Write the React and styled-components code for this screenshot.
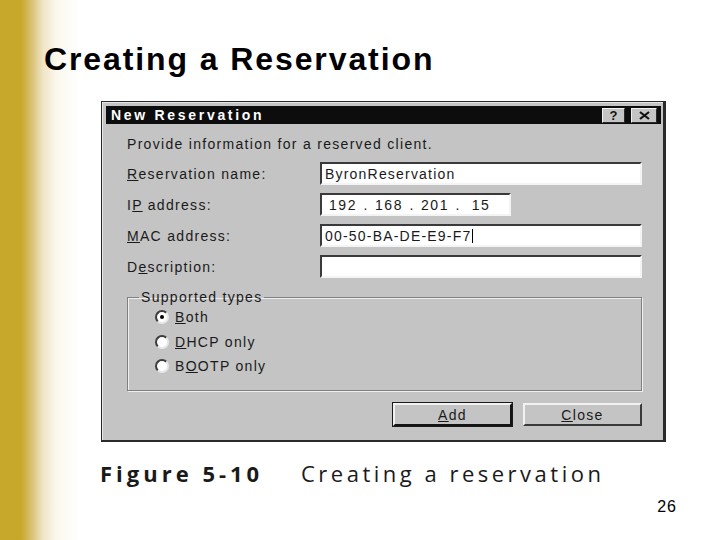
import React from 'react';
import styled, { createGlobalStyle } from 'styled-components';

const GlobalStyle = createGlobalStyle`
  html, body {
    margin: 0;
    padding: 0;
  }
  body {
    font-family: "Liberation Sans", Arial, sans-serif;
    background: #fff;
  }
`;

const Slide = styled.div`
  width: 720px;
  height: 540px;
  display: flex;
  flex-direction: column;
  overflow: hidden;
  background: linear-gradient(90deg, #c8a82a 0px, #c8a82a 21px, #d9c276 32px, #efe5c6 43px, #fbf8ee 57px, #fff 80px);
`;

const SlideTitle = styled.h1`
  margin: 41px 0 0 44px;
  font-family: "Liberation Sans", Arial, sans-serif;
  font-size: 32px;
  line-height: 36px;
  font-weight: 700;
  letter-spacing: 1.9px;
  color: #000;
`;

const Dialog = styled.div`
  box-sizing: border-box;
  width: 565px;
  margin: 24px 0 0 101px;
  padding: 4px 2px 0 4px;
  background: #c4c4c4;
  border: 1px solid #2a2a2a;
  border-right-width: 3px;
  border-bottom-width: 2px;
  box-shadow: inset 1px 1px 0 #e6e6e6;
  font-family: "Liberation Sans", Arial, sans-serif;
  font-size: 14px;
  letter-spacing: 1.3px;
  color: #1a1a1a;
`;

const TitleBar = styled.div`
  height: 18px;
  display: flex;
  align-items: center;
  justify-content: space-between;
  padding: 0 4px 0 5px;
  background: #0d0d0d;
`;

const TitleText = styled.span`
  color: #fff;
  font-size: 14px;
  font-weight: 700;
  letter-spacing: 2.7px;
`;

const TitleButtons = styled.div`
  display: flex;
  gap: 6px;
`;

const TitleButton = styled.div`
  box-sizing: border-box;
  width: ${p => p.w}px;
  height: 15px;
  display: flex;
  align-items: center;
  justify-content: center;
  background: #c4c4c4;
  border: 1px solid;
  border-color: #f2f2f2 #2a2a2a #2a2a2a #f2f2f2;
  font-size: 13px;
  font-weight: 700;
  letter-spacing: 0;
  color: #111;
`;

const Body = styled.div`
  padding: 12px 19px 14px 21px;
`;

const Intro = styled.div`
  line-height: 16px;
`;

const FormGrid = styled.div`
  display: grid;
  grid-template-columns: 193px 1fr;
  grid-auto-rows: 23px;
  row-gap: 8px;
  margin-top: 10px;
  align-items: center;
`;

const Label = styled.span`
  line-height: 16px;
`;

const Field = styled.div`
  box-sizing: border-box;
  height: 23px;
  width: ${p => (p.w ? `${p.w}px` : '100%')};
  display: flex;
  align-items: center;
  padding-left: 3px;
  background: #fff;
  border: 2px solid;
  border-color: #3a3a3a #f4f4f4 #f4f4f4 #3a3a3a;
  letter-spacing: 1.2px;
  white-space: pre;
`;

const Octet = styled.span`
  width: 36px;
  text-align: center;
  letter-spacing: 1.5px;
`;

const Dot = styled.span`
  width: 10px;
  text-align: center;
`;

const Caret = styled.span`
  display: inline-block;
  width: 0;
  height: 14px;
  border-left: 1.5px solid #000;
  margin-left: 1px;
`;

const GroupBox = styled.fieldset`
  margin: 11px 0 0 0;
  padding: 2px 10px 14px 27px;
  border: 1px solid #808080;
  box-shadow: inset 1px 1px 0 #efefef, 1px 1px 0 #efefef;
  min-inline-size: 0;
`;

const Legend = styled.legend`
  margin-left: -16px;
  padding: 0 2px;
  line-height: 16px;
`;

const RadioList = styled.div`
  display: flex;
  flex-direction: column;
  gap: 4.5px;
`;

const RadioRow = styled.label`
  height: 20px;
  display: flex;
  align-items: center;
  gap: 6px;
`;

const RadioDot = styled.span`
  box-sizing: border-box;
  width: 14px;
  height: 14px;
  border-radius: 50%;
  background: #fff;
  border: 2px solid;
  border-color: #3c3c3c #e8e8e8 #e8e8e8 #3c3c3c;
  display: flex;
  align-items: center;
  justify-content: center;

  &::after {
    content: '';
    display: ${p => (p.checked ? 'block' : 'none')};
    width: 4px;
    height: 4px;
    border-radius: 50%;
    background: #000;
  }
`;

const ButtonRow = styled.div`
  display: flex;
  justify-content: flex-end;
  gap: 11px;
  margin-top: 12px;
`;

const Button = styled.div`
  box-sizing: border-box;
  width: 119px;
  height: 23px;
  display: flex;
  align-items: center;
  justify-content: center;
  background: #c4c4c4;
  border: 2px solid;
  border-color: ${p => (p.primary ? '#f2f2f2 #141414 #141414 #f2f2f2' : '#f2f2f2 #3a3a3a #3a3a3a #f2f2f2')};
  box-shadow: ${p => (p.primary ? '0 0 0 1px #1a1a1a' : 'none')};
`;

const Caption = styled.div`
  display: flex;
  align-items: baseline;
  margin: 18px 0 0 100px;
  font-family: "Open Sans", "DejaVu Sans", sans-serif;
  font-size: 22px;
  line-height: 26px;
  color: #1a1a1a;
`;

const FigureNo = styled.span`
  font-weight: 700;
  letter-spacing: 4px;
  width: 201px;
`;

const FigureText = styled.span`
  font-weight: 400;
  letter-spacing: 3.5px;
`;

const PageNumber = styled.div`
  align-self: flex-end;
  margin: 12px 43px 0 0;
  font-family: "Liberation Sans", Arial, sans-serif;
  font-size: 16px;
  line-height: 18px;
  letter-spacing: 1px;
  color: #000;
`;

function CloseGlyph() {
  return (
    <svg width="11" height="9" viewBox="0 0 11 9">
      <path d="M1 1 L10 8 M10 1 L1 8" stroke="#111" strokeWidth="2.2" />
    </svg>
  );
}

const radios = [
  { key: 'both', label: <><u>B</u>oth</>, checked: true },
  { key: 'dhcp', label: <><u>D</u>HCP only</> },
  { key: 'bootp', label: <>B<u>O</u>OTP only</> },
];

export default function App() {
  return (
    <>
      <GlobalStyle />
      <Slide>
        <SlideTitle>Creating a Reservation</SlideTitle>

        <Dialog>
          <TitleBar>
            <TitleText>New Reservation</TitleText>
            <TitleButtons>
              <TitleButton w={23}>?</TitleButton>
              <TitleButton w={26}><CloseGlyph /></TitleButton>
            </TitleButtons>
          </TitleBar>

          <Body>
            <Intro>Provide information for a reserved client.</Intro>

            <FormGrid>
              <Label><u>R</u>eservation name:</Label>
              <Field>ByronReservation</Field>

              <Label>I<u>P</u> address:</Label>
              <Field w={191}>
                <Octet>192</Octet><Dot>.</Dot>
                <Octet>168</Octet><Dot>.</Dot>
                <Octet>201</Octet><Dot>.</Dot>
                <Octet>15</Octet>
              </Field>

              <Label><u>M</u>AC address:</Label>
              <Field>00-50-BA-DE-E9-F7<Caret /></Field>

              <Label>D<u>e</u>scription:</Label>
              <Field />
            </FormGrid>

            <GroupBox>
              <Legend>Supported types</Legend>
              <RadioList>
                {radios.map(r => (
                  <RadioRow key={r.key}>
                    <RadioDot checked={r.checked} />
                    <span>{r.label}</span>
                  </RadioRow>
                ))}
              </RadioList>
            </GroupBox>

            <ButtonRow>
              <Button primary><span><u>A</u>dd</span></Button>
              <Button><span><u>C</u>lose</span></Button>
            </ButtonRow>
          </Body>
        </Dialog>

        <Caption>
          <FigureNo>Figure 5-10</FigureNo>
          <FigureText>Creating a reservation</FigureText>
        </Caption>

        <PageNumber>26</PageNumber>
      </Slide>
    </>
  );
}
